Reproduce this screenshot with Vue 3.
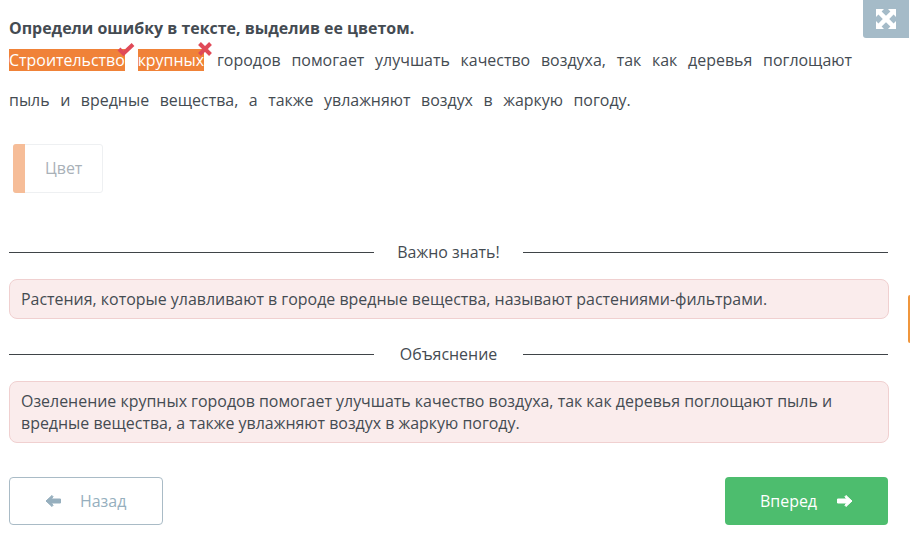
<template>
  <div class="page">
    <button class="fullscreen" aria-label="На весь экран">
      <svg width="22" height="22" viewBox="0 0 22 22" fill="#fff">
        <path d="M1 1h8L6.6 3.4 11 7.800l4.400-4.400L13 1h8v8l-2.400-2.400L14.200 11l4.400 4.400L21 13v8h-8l2.400-2.400L11 14.200l-4.400 4.400L9 21H1v-8l2.400 2.400L7.800 11 3.400 6.600 1 9z" />
      </svg>
    </button>
    <div class="side-tab"></div>

    <h1 class="task">Определи ошибку в тексте, выделив ее цветом.</h1>
    <p class="sentence">
      <span class="mark">Строительство<svg class="sign" width="18" height="14" viewBox="0 0 18 14"><path d="M2 7l4.500 4.500L16 2.500" fill="none" stroke="#e04a58" stroke-width="4" /></svg></span>
      {{ ' ' }}
      <span class="mark">крупных<svg class="sign cross" width="14" height="14" viewBox="0 0 14 14"><path d="M1.500 1.500l11 11M12.500 1.500l-11 11" fill="none" stroke="#e04a58" stroke-width="4" /></svg></span>
      городов помогает улучшать качество воздуха, так как деревья поглощают пыль и вредные вещества, а также увлажняют воздух в жаркую погоду.
    </p>

    <div class="palette">
      <span class="swatch"></span>
      <span class="palette-label">Цвет</span>
    </div>

    <template v-for="block in blocks" :key="block.title">
      <div class="divider">
        <span class="rule"></span>
        <span class="divider-title">{{ block.title }}</span>
        <span class="rule"></span>
      </div>
      <div class="note">{{ block.text }}</div>
    </template>

    <div class="nav">
      <button class="btn back">
        <svg class="arrow" width="18" height="14" viewBox="0 0 18 14"><path d="M8 1.500L2 7l6 5.500 1-1L7.500 9H16.500V5H7.500L9 2.500z" fill="#96afbe" stroke="#96afbe" stroke-linejoin="round" /></svg>
        <span>Назад</span>
      </button>
      <button class="btn next">
        <span>Вперед</span>
        <svg class="arrow" width="18" height="14" viewBox="0 0 18 14"><path d="M10 1.500L16 7l-6 5.500-1-1L10.500 9H1.500V5H10.500L9 2.500z" fill="#fff" stroke="#fff" stroke-linejoin="round" /></svg>
      </button>
    </div>
  </div>
</template>

<script setup>
const blocks = [
  {
    title: 'Важно знать!',
    text: 'Растения, которые улавливают в городе вредные вещества, называют растениями-фильтрами.',
  },
  {
    title: 'Объяснение',
    text: 'Озеленение крупных городов помогает улучшать качество воздуха, так как деревья поглощают пыль и вредные вещества, а также увлажняют воздух в жаркую погоду.',
  },
];
</script>

<style>
html, body { background: #fff; }
</style>

<style scoped>
.page {
  position: relative;
  box-sizing: border-box;
  width: 910px;
  height: 552px;
  padding: 17px 22px 0 9px;
  overflow: hidden;
  font-family: "Open Sans", sans-serif;
  font-size: 15.95px;
  color: #444b52;
}
.fullscreen {
  position: absolute;
  top: 0;
  right: 1px;
  width: 46px;
  height: 38px;
  padding: 0;
  border: 0;
  border-bottom-left-radius: 3px;
  background: #a5bbc8;
  display: flex;
  align-items: center;
  justify-content: center;
}
.side-tab {
  position: absolute;
  top: 295px;
  right: 0;
  width: 2px;
  height: 48px;
  background: #f0963c;
  border-radius: 2px 0 0 2px;
}
.task {
  margin: 0;
  font-size: inherit;
  font-weight: 700;
  line-height: 22px;
}
.sentence {
  margin: 1px 36px 0 0;
  line-height: 40px;
  text-align: justify;
  word-spacing: 6.4px;
}
.mark {
  position: relative;
  margin-right: 2px;
  background: #f08238;
  color: #fff;
  word-spacing: 0;
}
.sign {
  position: absolute;
  top: -7px;
  right: -10px;
}
.sign.cross {
  right: -8px;
}
.palette {
  display: flex;
  width: 90px;
  height: 49px;
  margin: 24px 0 59px 4px;
  box-sizing: border-box;
  border: 1px solid #eef0f2;
  border-radius: 3px;
  align-items: center;
}
.swatch {
  width: 12px;
  height: 49px;
  margin: -1px 0 -1px -1px;
  background: #f6bd98;
  border-radius: 3px 0 0 3px;
}
.palette-label {
  margin: -2px 0 0 20px;
  color: #a9b1b8;
}
.divider {
  display: flex;
  align-items: center;
  height: 0;
  justify-content: space-between;
}
.rule {
  width: 365px;
  border-top: 1px solid #3f4448;
}
.divider-title {
  flex: 1;
  text-align: center;
  line-height: 22px;
}
.note {
  margin: 27px -1px 35px 0;
  padding: 8px 11px;
  background: #faecec;
  border: 1px solid #f0d0d0;
  border-radius: 8px;
  line-height: 22px;
}
.nav {
  display: flex;
  justify-content: space-between;
  margin-top: -1px;
}
.btn {
  box-sizing: border-box;
  height: 48px;
  display: flex;
  align-items: center;
  font: inherit;
  border-radius: 4px;
}
.back {
  width: 154px;
  padding-left: 34px;
  gap: 18px;
  background: #fff;
  border: 1px solid #a9bbc6;
  color: #96afbe;
}
.next {
  width: 163px;
  padding-left: 35px;
  gap: 19px;
  background: #4dbd6e;
  border: 0;
  color: #fff;
}
</style>
